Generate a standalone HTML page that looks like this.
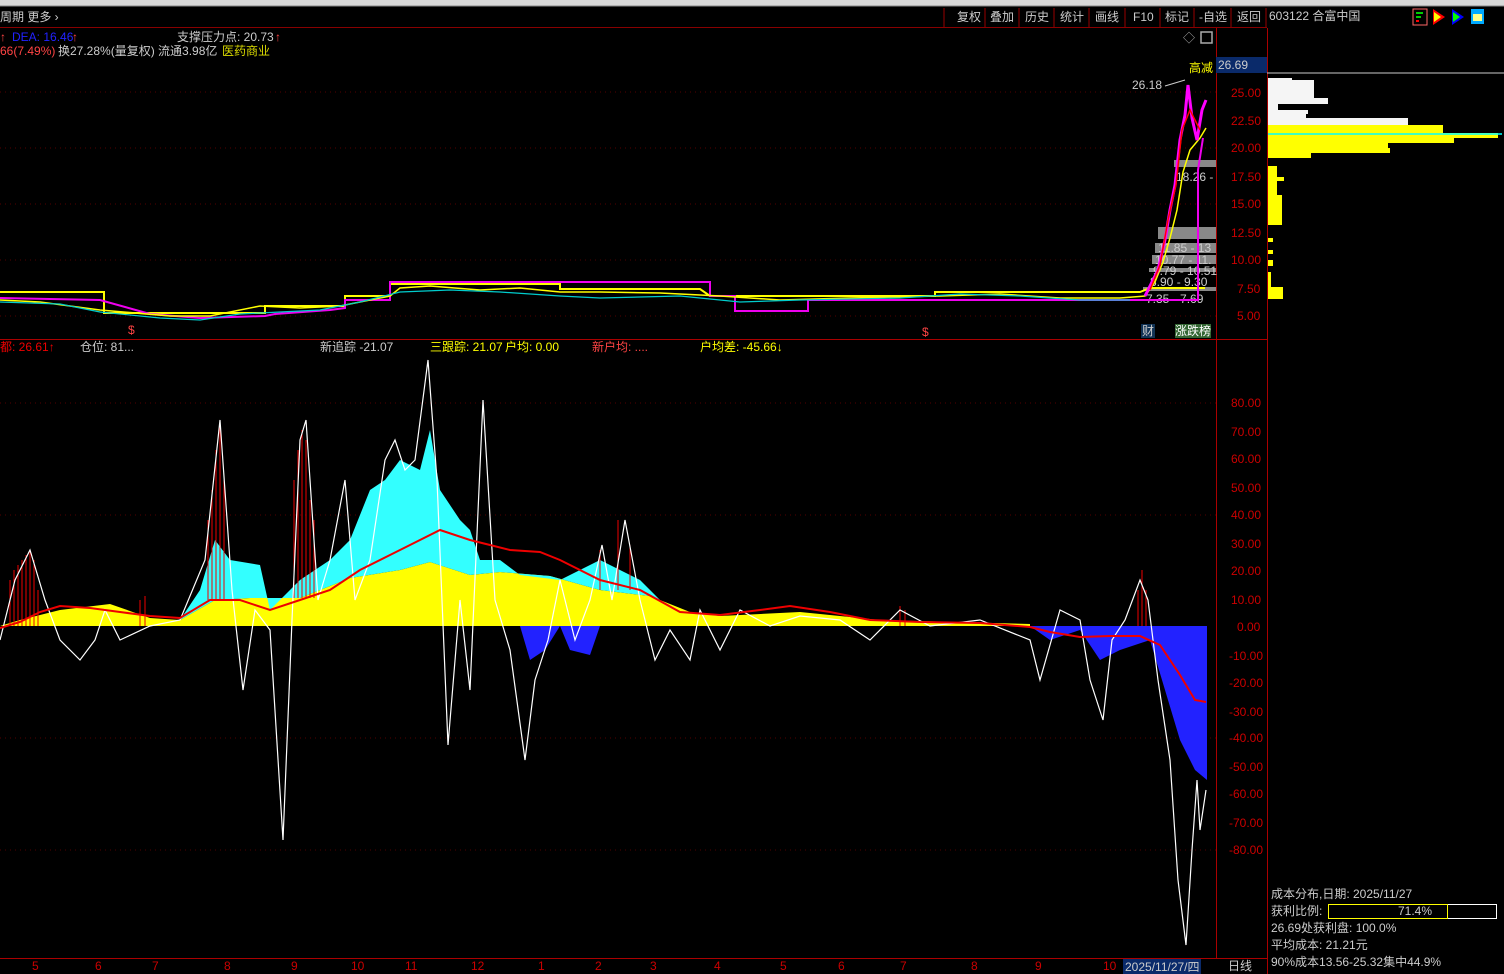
<!DOCTYPE html><html><head><meta charset="utf-8"><style>
body{margin:0;background:#000;width:1504px;height:974px;overflow:hidden;font-family:"Liberation Sans","Noto Sans CJK SC",sans-serif;}
svg{display:block}
text{font-family:"Liberation Sans","Noto Sans CJK SC",sans-serif;font-size:12px}
</style></head><body>
<svg width="1504" height="974" viewBox="0 0 1504 974">
<rect width="1504" height="974" fill="#000"/>
<rect x="0" y="0" width="1504" height="6" fill="#d8d8d8"/>
<line x1="0" y1="6" x2="1504" y2="6" stroke="#888"/>
<text x="0" y="21" fill="#ccc">周期 更多 ›</text>
<g fill="#ccc" font-size="12">
<text x="957" y="21">复权</text><text x="990" y="21">叠加</text><text x="1025" y="21">历史</text><text x="1060" y="21">统计</text><text x="1095" y="21">画线</text><text x="1133" y="21">F10</text><text x="1165" y="21">标记</text><text x="1199" y="21">-自选</text><text x="1237" y="21">返回</text>
<text x="1269" y="20">603122 合富中国</text></g>
<g stroke="#900"><line x1="944" y1="8" x2="944" y2="27"/><line x1="985" y1="8" x2="985" y2="27"/><line x1="1019" y1="8" x2="1019" y2="27"/><line x1="1054" y1="8" x2="1054" y2="27"/><line x1="1089" y1="8" x2="1089" y2="27"/><line x1="1125" y1="8" x2="1125" y2="27"/><line x1="1160" y1="8" x2="1160" y2="27"/><line x1="1194" y1="8" x2="1194" y2="27"/><line x1="1231" y1="8" x2="1231" y2="27"/><line x1="1266" y1="8" x2="1266" y2="27"/></g>
<rect x="1413" y="9" width="14" height="16" fill="none" stroke="#f66"/><rect x="1416" y="12" width="7" height="2" fill="#0c0"/><rect x="1416" y="16" width="5" height="2" fill="#0c0"/><rect x="1416" y="20" width="3" height="2" fill="#f00"/>
<polygon points="1433,9 1445,17 1433,25" fill="#f00"/><polygon points="1434,12 1441,17 1434,22" fill="#ff0"/>
<polygon points="1452,9 1464,17 1452,25" fill="#00f"/><polygon points="1453,12 1460,17 1453,22" fill="#0f0"/>
<rect x="1471" y="9" width="13" height="15" fill="#0af"/><rect x="1473" y="14" width="9" height="7" fill="#ff8"/>
<line x1="0" y1="27.5" x2="1267" y2="27.5" stroke="#800"/>
<text x="0" y="41" fill="#f44">↑</text><text x="12" y="41" fill="#22f">DEA: 16.46</text><text x="72" y="41" fill="#f44">↑</text>
<text x="177" y="41" fill="#ccc">支撑压力点: 20.73</text><text x="275" y="41" fill="#f44">↑</text>
<text x="0" y="55" fill="#f44">66(7.49%)</text><text x="58" y="55" fill="#ccc">换27.28%(量复权) 流通3.98亿</text><text x="222" y="55" fill="#dd0">医药商业</text>
<text x="1183" y="42" fill="#aaa" font-size="13">◇</text><rect x="1201" y="32" width="11" height="11" fill="none" stroke="#aaa" stroke-width="1.5"/>
<line x1="1216.5" y1="28" x2="1216.5" y2="958" stroke="#a00"/>
<line x1="1267.5" y1="28" x2="1267.5" y2="974" stroke="#a00"/>
<line x1="0" y1="339.5" x2="1267" y2="339.5" stroke="#a00"/>
<line x1="0" y1="958.5" x2="1267" y2="958.5" stroke="#a00"/>
<rect x="1216" y="57" width="51" height="16" fill="#0a2a6a"/><text x="1218" y="69" fill="#ccc">26.69</text>
<line x1="1267" y1="73" x2="1504" y2="73" stroke="#ccc"/>
<text x="1189" y="72" fill="#ff0" font-size="11">高减</text>
<g fill="#c00" font-size="12">
<text x="1231" y="97">25.00</text><text x="1231" y="125">22.50</text><text x="1231" y="152">20.00</text><text x="1231" y="181">17.50</text><text x="1231" y="208">15.00</text><text x="1231" y="237">12.50</text><text x="1231" y="264">10.00</text><text x="1237" y="293">7.50</text><text x="1237" y="320">5.00</text></g>
<g stroke="#500" stroke-dasharray="1,4"><line x1="0" y1="92" x2="1216" y2="92"/><line x1="0" y1="148" x2="1216" y2="148"/><line x1="0" y1="204" x2="1216" y2="204"/><line x1="0" y1="260" x2="1216" y2="260"/><line x1="0" y1="316" x2="1216" y2="316"/></g>
<g fill="#888"><rect x="1174" y="160" width="42" height="7"/><rect x="1158" y="227" width="58" height="12"/><rect x="1155" y="243" width="61" height="10"/><rect x="1152" y="255" width="64" height="9"/><rect x="1149" y="268" width="67" height="4"/><rect x="1143" y="287" width="73" height="4"/></g>
<g fill="#ccc" font-size="11"><text x="1176" y="181">18.26 -</text><text x="1158" y="252">11.85 - 13</text><text x="1155" y="264">10.77 - 11.</text><text x="1153" y="275">9.79 - 10.51</text><text x="1150" y="286">8.90 - 9.30</text><text x="1146" y="303">7.35 - 7.69</text><text x="1132" y="89">26.18</text></g>
<polyline points="1165,86 1185,80" stroke="#ccc" fill="none"/>
<polyline points="0,292 104,292 104,313 200,313 265,313 265,306 345,306 345,296 390,296 390,284 560,284 560,289 700,289 710,296 935,296 935,292 1140,292 1150,288 1205,288" fill="none" stroke="#ff0" stroke-width="2"/>
<polyline points="0,298 100,300 150,314 200,318 265,316 275,314 330,310 345,308 345,300 390,300 390,282 710,282 710,296 735,296 735,311 808,311 808,300 935,300 1140,300 1198,300 1198,170 1203,138" fill="none" stroke="#e0e" stroke-width="2"/>
<polyline points="0,300 40,302 100,310 170,316 210,316 260,306 300,308 340,306 390,296 400,288 430,286 480,290 520,288 560,292 600,292 660,293 720,296 780,300 850,298 940,296 1000,294 1060,298 1120,298 1145,296 1155,282 1163,262 1170,238 1177,210 1183,172 1190,150 1200,138 1206,128" fill="none" stroke="#ff0" stroke-width="1.5"/>
<polyline points="0,302 60,304 100,312 160,318 200,320 240,314 280,312 320,310 360,302 400,292 450,290 500,292 560,296 600,298 680,296 740,302 800,300 900,298 960,294 1020,296 1080,300 1130,300" fill="none" stroke="#0cc" stroke-width="1.2"/>
<polyline points="1145,296 1150,286 1158,270 1165,240 1170,210 1175,185 1180,140 1185,115 1188,85 1192,118 1197,140 1202,110 1206,100" fill="none" stroke="#f0f" stroke-width="3"/>
<polyline points="1150,290 1160,265 1168,220 1176,185 1182,130 1190,110 1200,130" fill="none" stroke="#f00" stroke-width="1.5"/>
<text x="128" y="334" fill="#f44" font-size="11">$</text><text x="922" y="336" fill="#f44" font-size="11">$</text>
<rect x="1141" y="324" width="14" height="14" fill="#135"/><text x="1142" y="335" fill="#ccc">财</text>
<rect x="1175" y="324" width="36" height="14" fill="#363"/><text x="1175" y="335" fill="#fff">涨跌榜</text>
<g fill="#f5f5f5"><rect x="1268" y="78" width="24" height="22"/><rect x="1268" y="80" width="46" height="24"/><rect x="1268" y="98" width="60" height="6"/><rect x="1268" y="104" width="10" height="8"/><rect x="1268" y="110" width="40" height="4"/><rect x="1268" y="114" width="38" height="8"/><rect x="1268" y="118" width="140" height="8"/></g>
<g fill="#ff0"><rect x="1268" y="125" width="175" height="8"/><rect x="1268" y="133" width="230" height="5"/><rect x="1268" y="138" width="186" height="5"/><rect x="1268" y="143" width="120" height="5"/><rect x="1268" y="148" width="122" height="5"/><rect x="1268" y="153" width="43" height="5"/><rect x="1268" y="166" width="9" height="58"/><rect x="1268" y="177" width="16" height="4"/><rect x="1268" y="195" width="14" height="30"/><rect x="1268" y="238" width="5" height="4"/><rect x="1268" y="250" width="5" height="4"/><rect x="1268" y="260" width="5" height="6"/><rect x="1268" y="272" width="3" height="15"/><rect x="1268" y="287" width="15" height="12"/></g>
<line x1="1268" y1="134" x2="1502" y2="134" stroke="#0ff" stroke-width="1.5"/>
<text x="0" y="351" fill="#e00">都: 26.61↑</text><text x="80" y="351" fill="#ccc">仓位: 81...</text><text x="320" y="351" fill="#ccc">新追踪 -21.07</text><text x="430" y="351" fill="#ff0">三跟踪: 21.07</text><text x="505" y="351" fill="#ff0">户均: 0.00</text><text x="592" y="351" fill="#f44">新户均: ....</text><text x="700" y="351" fill="#ff0">户均差: -45.66↓</text>
<g fill="#c00" font-size="12"><text x="1231" y="407">80.00</text><text x="1231" y="436">70.00</text><text x="1231" y="463">60.00</text><text x="1231" y="492">50.00</text><text x="1231" y="519">40.00</text><text x="1231" y="548">30.00</text><text x="1231" y="575">20.00</text><text x="1231" y="604">10.00</text><text x="1237" y="631">0.00</text><text x="1229" y="660">-10.00</text><text x="1229" y="687">-20.00</text><text x="1229" y="716">-30.00</text><text x="1229" y="742">-40.00</text><text x="1229" y="771">-50.00</text><text x="1229" y="798">-60.00</text><text x="1229" y="827">-70.00</text><text x="1229" y="854">-80.00</text></g>
<g stroke="#500" stroke-dasharray="1,4"><line x1="0" y1="403" x2="1216" y2="403"/><line x1="0" y1="515" x2="1216" y2="515"/><line x1="0" y1="738" x2="1216" y2="738"/><line x1="0" y1="850" x2="1216" y2="850"/></g>
<polygon points="0,626 20,620 60,610 110,604 150,618 180,620 215,600 250,598 300,598 350,578 400,570 430,562 470,575 500,572 550,576 600,590 650,596 690,612 720,616 800,612 880,620 1030,624 1030,626" fill="#ff0"/>
<polygon points="180,620 200,590 215,540 230,560 260,565 270,610 300,580 330,560 350,540 370,490 385,480 400,460 420,470 430,430 440,490 460,520 470,530 480,560 500,560 520,575 560,580 600,560 620,570 640,580 660,600 690,612 650,596 600,590 550,576 500,572 470,575 430,562 400,570 350,578 300,598 250,598 215,600" fill="#3ff"/>
<polygon points="1030,626 1050,640 1080,630 1100,660 1120,650 1150,640 1165,690 1180,740 1195,770 1207,780 1207,626" fill="#22f"/>
<polygon points="520,626 530,660 545,650 560,626 570,650 590,655 600,626" fill="#22f"/>
<g stroke="#e00" stroke-width="1">
<line x1="10" y1="626" x2="10" y2="580"/><line x1="14" y1="626" x2="14" y2="570"/><line x1="18" y1="626" x2="18" y2="565"/><line x1="22" y1="626" x2="22" y2="560"/><line x1="26" y1="626" x2="26" y2="555"/><line x1="30" y1="626" x2="30" y2="552"/><line x1="34" y1="626" x2="34" y2="560"/><line x1="38" y1="626" x2="38" y2="590"/>
<line x1="208" y1="600" x2="208" y2="520"/><line x1="212" y1="600" x2="212" y2="490"/><line x1="216" y1="600" x2="216" y2="450"/><line x1="220" y1="600" x2="220" y2="420"/><line x1="224" y1="600" x2="224" y2="480"/>
<line x1="294" y1="598" x2="294" y2="480"/><line x1="298" y1="598" x2="298" y2="450"/><line x1="302" y1="598" x2="302" y2="430"/><line x1="306" y1="598" x2="306" y2="440"/><line x1="310" y1="598" x2="310" y2="500"/><line x1="314" y1="598" x2="314" y2="520"/>
<line x1="140" y1="626" x2="140" y2="600"/><line x1="145" y1="626" x2="145" y2="596"/><line x1="600" y1="590" x2="600" y2="550"/><line x1="618" y1="590" x2="618" y2="520"/><line x1="630" y1="590" x2="630" y2="545"/>
<line x1="1138" y1="626" x2="1138" y2="590"/><line x1="1142" y1="626" x2="1142" y2="570"/><line x1="1146" y1="626" x2="1146" y2="590"/>
<line x1="900" y1="626" x2="900" y2="606"/><line x1="905" y1="626" x2="905" y2="610"/></g>
<polyline points="0,640 15,580 30,550 45,600 60,640 80,660 95,640 105,610 120,640 150,626 180,620 205,560 220,420 232,590 243,690 255,610 270,630 283,840 292,620 300,440 306,420 318,600 330,560 345,480 355,600 370,560 385,460 395,440 405,470 415,460 428,360 437,480 448,745 460,600 470,690 483,400 495,600 510,650 525,760 535,680 548,640 560,580 575,640 590,600 602,545 612,600 625,520 640,600 655,660 670,630 690,660 700,610 720,650 740,610 770,626 800,616 840,620 870,640 900,610 930,626 980,620 1030,640 1040,680 1060,610 1080,620 1090,680 1103,720 1112,640 1125,620 1140,580 1148,600 1158,680 1170,760 1178,880 1186,945 1192,850 1197,780 1200,830 1206,790" fill="none" stroke="#fff" stroke-width="1.2"/>
<polyline points="0,628 20,622 40,612 60,606 90,608 120,612 150,616 180,618 210,600 240,600 270,610 300,600 330,590 360,570 390,555 410,545 440,530 470,540 490,545 510,550 540,552 560,560 600,580 640,590 680,612 720,615 760,610 790,606 830,612 870,620 920,622 980,623 1030,627 1050,632 1080,637 1110,636 1140,636 1160,645 1180,675 1195,700 1206,702" fill="none" stroke="#e00" stroke-width="2"/>
<g fill="#c00" font-size="11"><text x="32" y="970">5</text><text x="95" y="970">6</text><text x="152" y="970">7</text><text x="224" y="970">8</text><text x="291" y="970">9</text><text x="351" y="970">10</text><text x="405" y="970">11</text><text x="471" y="970">12</text><text x="538" y="970">1</text><text x="595" y="970">2</text><text x="650" y="970">3</text><text x="714" y="970">4</text><text x="780" y="970">5</text><text x="838" y="970">6</text><text x="900" y="970">7</text><text x="971" y="970">8</text><text x="1035" y="970">9</text><text x="1103" y="970">10</text></g>
<rect x="1123" y="959" width="78" height="15" fill="#0a2a6a"/><text x="1125" y="971" fill="#ccc">2025/11/27/四</text>
<text x="1228" y="970" fill="#ccc">日线</text>
<g fill="#ccc" font-size="12"><text x="1271" y="898">成本分布,日期: 2025/11/27</text><text x="1271" y="915">获利比例:</text><text x="1271" y="932">26.69处获利盘: 100.0%</text><text x="1271" y="949">平均成本: 21.21元</text><text x="1271" y="966">90%成本13.56-25.32集中44.9%</text></g>
<rect x="1328.5" y="904.5" width="168" height="14" fill="none" stroke="#fff"/><rect x="1328.5" y="904.5" width="119" height="14" fill="none" stroke="#ff0"/><text x="1398" y="915" fill="#ccc">71.4%</text>
</svg></body></html>
